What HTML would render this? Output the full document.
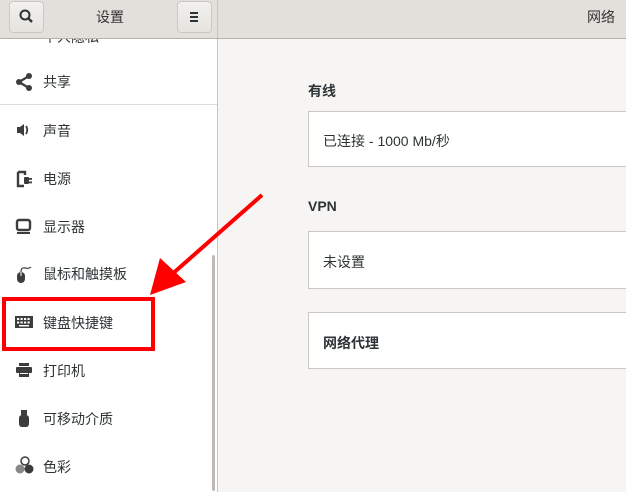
<html><head><style>
body{margin:0;width:626px;height:492px;overflow:hidden;font-family:"Liberation Sans","Noto Sans CJK SC",sans-serif;font-size:14px;color:#2e3436;position:relative;background:#f6f5f4}
.hd{position:absolute;top:0;left:0;width:626px;height:38px;background:#e3e0dc;border-bottom:1px solid #b6b2ad}
.btn{position:absolute;top:1px;width:33px;height:30px;background:linear-gradient(#f2f1ef,#e6e3df);border:1px solid #cdc7c2;border-radius:4px}
.sb{position:absolute;top:39px;left:0;width:217px;height:453px;background:#fff;border-right:1px solid #c8c4bf;overflow:hidden}
.it{position:absolute;left:43px;font-size:14px}
.ic{position:absolute;left:14px}
.box{position:absolute;left:308px;width:330px;background:#fff;border:1px solid #cdc7c2}
</style></head><body>
<div class="hd">
<div class="btn" style="left:9px"><svg width="33" height="30"><circle cx="15" cy="13" r="4.5" fill="none" stroke="#2e3436" stroke-width="2"/><line x1="18" y1="16" x2="22" y2="20" stroke="#2e3436" stroke-width="2.4"/></svg></div>
<div style="position:absolute;left:96px;top:7px;font-size:14px;color:#333">设置</div>
<div class="btn" style="left:177px"><svg width="33" height="30"><g stroke="#2e3436" stroke-width="2"><line x1="12" y1="11" x2="20" y2="11"/><line x1="12" y1="15" x2="20" y2="15"/><line x1="12" y1="19" x2="20" y2="19"/></g></svg></div>
<div style="position:absolute;left:217px;top:0;width:1px;height:38px;background:#c8c4bf"></div>
<div style="position:absolute;left:587px;top:7px;color:#333">网络</div>
</div>
<div class="sb">
<div class="it" style="top:-12px">个人隐私</div>
<svg class="ic" style="top:33px" width="20" height="20"><g fill="#3d3d3d"><circle cx="5" cy="10" r="3"/><circle cx="15" cy="4" r="3"/><circle cx="15" cy="16" r="3"/></g><g stroke="#3d3d3d" stroke-width="2.2"><line x1="5" y1="10" x2="15" y2="4"/><line x1="5" y1="10" x2="15" y2="16"/></g></svg>
<div class="it" style="top:33px">共享</div>
<div style="position:absolute;top:65px;left:0;width:217px;height:1px;background:#e0ddd9"></div>
<svg class="ic" style="top:83px" width="20" height="16"><path d="M3 5h3l4-3v12l-4-3H3z" fill="#3d3d3d"/><path d="M12 4q2.5 4 0 8" stroke="#3d3d3d" fill="none" stroke-width="1.8"/></svg>
<div class="it" style="top:82px">声音</div>
<svg class="ic" style="top:130px" width="20" height="20"><path d="M4 3h7v3M4 3v14h6" fill="none" stroke="#3d3d3d" stroke-width="2.4"/><rect x="10" y="8" width="5" height="7" rx="1" fill="#3d3d3d"/><rect x="15" y="9" width="3" height="1.8" fill="#3d3d3d"/><rect x="15" y="12.5" width="3" height="1.8" fill="#3d3d3d"/></svg>
<div class="it" style="top:130px">电源</div>
<svg class="ic" style="top:178px" width="20" height="20"><rect x="3" y="3" width="13" height="10" rx="2" fill="none" stroke="#3d3d3d" stroke-width="2.4"/><rect x="3" y="15" width="13" height="2" fill="#3d3d3d"/></svg>
<div class="it" style="top:178px">显示器</div>
<svg class="ic" style="top:224px" width="22" height="22"><rect x="3" y="9" width="8" height="11" rx="4" fill="#3d3d3d"/><line x1="7" y1="9" x2="7" y2="13" stroke="#fff" stroke-width="1"/><path d="M7 9q0-5 4-4t6-1" fill="none" stroke="#3d3d3d" stroke-width="1.2"/></svg>
<div class="it" style="top:225px">鼠标和触摸板</div>
<svg class="ic" style="top:275px" width="20" height="16"><rect x="1" y="2" width="18" height="12" fill="#3d3d3d"/><g fill="#fff"><rect x="3" y="4" width="2.2" height="2"/><rect x="6.5" y="4" width="2.2" height="2"/><rect x="10" y="4" width="2.2" height="2"/><rect x="13.5" y="4" width="2.2" height="2"/><rect x="3" y="7.5" width="2.2" height="2"/><rect x="6.5" y="7.5" width="2.2" height="2"/><rect x="10" y="7.5" width="2.2" height="2"/><rect x="13.5" y="7.5" width="2.2" height="2"/><rect x="5" y="11" width="10" height="1.5"/></g></svg>
<div class="it" style="top:274px">键盘快捷键</div>
<svg class="ic" style="top:322px" width="20" height="18"><rect x="5" y="2" width="10" height="3" fill="#3d3d3d"/><rect x="2" y="6" width="16" height="6" rx="1" fill="#3d3d3d"/><rect x="5" y="11" width="10" height="5" fill="#3d3d3d"/><rect x="6" y="12" width="8" height="1" fill="#fff"/></svg>
<div class="it" style="top:322px">打印机</div>
<svg class="ic" style="top:369px" width="20" height="20"><rect x="7" y="2" width="6" height="5" fill="#3d3d3d"/><rect x="5" y="7" width="10" height="12" rx="3" fill="#3d3d3d"/></svg>
<div class="it" style="top:370px">可移动介质</div>
<svg class="ic" style="top:417px" width="22" height="20"><circle cx="11" cy="5" r="4" fill="none" stroke="#3d3d3d" stroke-width="1.5"/><circle cx="6" cy="13" r="4.5" fill="#888"/><circle cx="15" cy="13" r="4.5" fill="#3d3d3d"/></svg>
<div class="it" style="top:418px">色彩</div>
<div style="position:absolute;left:212px;top:216px;width:3px;height:236px;background:#bdbab6;border-radius:2px"></div>
</div>
<div style="position:absolute;left:308px;top:81px;font-weight:bold">有线</div>
<div class="box" style="top:111px;height:54px"><div style="position:absolute;left:14px;top:19px">已连接 - 1000 Mb/秒</div></div>
<div style="position:absolute;left:308px;top:198px;font-weight:bold">VPN</div>
<div class="box" style="top:231px;height:56px"><div style="position:absolute;left:14px;top:20px">未设置</div></div>
<div class="box" style="top:312px;height:55px"><div style="position:absolute;left:14px;top:20px;font-weight:bold">网络代理</div></div>
<div style="position:absolute;left:2px;top:297px;width:145px;height:46px;border:4px solid #f00"></div>
<svg style="position:absolute;left:0;top:0" width="626" height="492"><line x1="262" y1="195" x2="170" y2="276" stroke="#f00" stroke-width="4"/><polygon points="150,295 160,258 186,282" fill="#f00"/></svg>
</body></html>
